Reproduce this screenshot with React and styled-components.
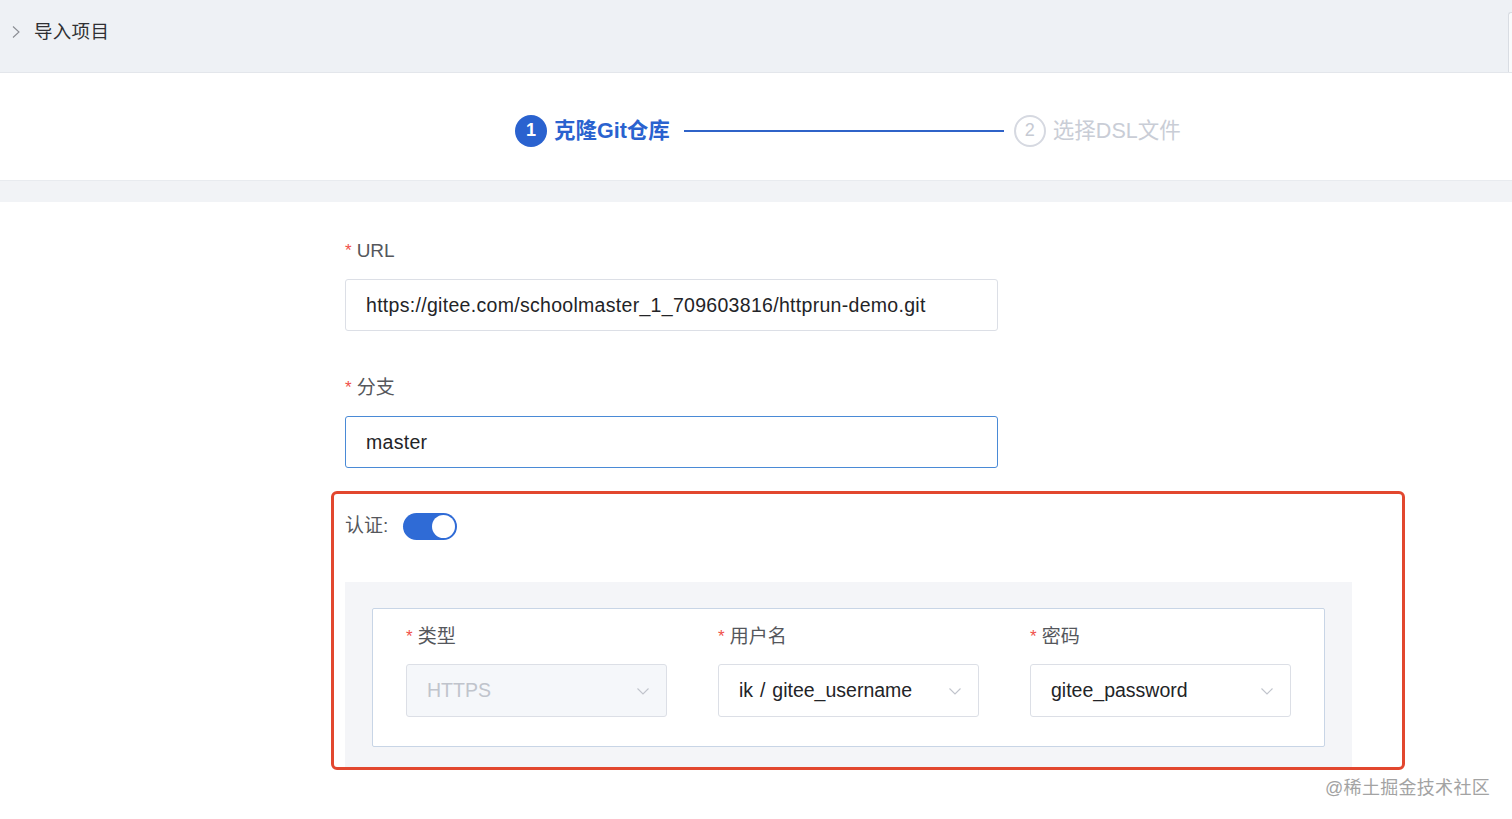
import React from "react";
import styled, { createGlobalStyle } from "styled-components";

const GlobalStyle = createGlobalStyle`
  html, body {
    margin: 0;
    padding: 0;
    background: #fff;
    font-family: "Liberation Sans", "Noto Sans CJK SC", sans-serif;
    -webkit-font-smoothing: antialiased;
  }
`;

const Page = styled.div`
  width: 1512px;
  height: 819px;
  overflow: hidden;
  position: relative;
`;

const Header = styled.header`
  height: 73px;
  box-sizing: border-box;
  background: #eef1f5;
  border-bottom: 1px solid #e3e6eb;
  display: flex;
  align-items: flex-start;
  padding: 21px 0 0 10px;
  position: relative;
`;

const Crumb = styled.div`
  display: flex;
  align-items: center;
  gap: 12px;
  height: 22px;
`;

const HeaderEdge = styled.div`
  position: absolute;
  right: 0;
  top: 12px;
  bottom: 0;
  width: 3px;
  border-left: 1px solid #d9dde3;
  border-top: 1px solid #d9dde3;
  border-top-left-radius: 3px;
  background: #fafbfc;
`;

const Title = styled.h1`
  margin: 0;
  font-size: 18.5px;
  line-height: 22px;
  font-weight: 400;
  color: #2f3033;
  letter-spacing: 0.3px;
`;

const StepsBar = styled.div`
  height: 107px;
  box-sizing: border-box;
  background: #fff;
  display: flex;
  align-items: center;
  padding: 8px 0 0 515px;
`;

const Step = styled.div`
  display: flex;
  align-items: center;
  gap: 7px;
`;

const StepIcon = styled.span`
  width: 32px;
  height: 32px;
  box-sizing: border-box;
  border-radius: 50%;
  display: flex;
  align-items: center;
  justify-content: center;
  font-size: 18px;
  font-weight: ${(p) => (p.$active ? 700 : 400)};
  background: ${(p) => (p.$active ? "#2a62cf" : "#fff")};
  color: ${(p) => (p.$active ? "#fff" : "#c6cad3")};
  border: ${(p) => (p.$active ? "none" : "2px solid #d6d9e1")};
`;

const StepText = styled.span`
  font-size: 21.5px;
  line-height: 32px;
  font-weight: ${(p) => (p.$active ? 700 : 400)};
  color: ${(p) => (p.$active ? "#2a62cf" : "#c9cdd6")};
`;

const StepLine = styled.div`
  width: 320px;
  height: 2px;
  background: #2f63c8;
  margin: 0 10px 0 14px;
`;

const Band = styled.div`
  height: 22px;
  background: #f1f3f6;
  border-top: 1px solid #e8ebef;
  box-sizing: border-box;
`;

const Form = styled.div`
  margin-left: 345px;
  padding-top: 38px;
  display: flex;
  flex-direction: column;
`;

const Field = styled.div`
  width: 653px;
  display: flex;
  flex-direction: column;
  gap: 17px;
  margin-bottom: ${(p) => p.$mb || 0}px;
`;

const Label = styled.label`
  font-size: 19px;
  line-height: 22px;
  color: #55575c;
  display: flex;
  align-items: center;
`;

const Star = styled.span`
  color: #f0504a;
  font-size: 17px;
  margin-right: 5px;
  line-height: 1;
  position: relative;
  top: -1px;
`;

const Input = styled.div`
  height: 52px;
  box-sizing: border-box;
  border: 1px solid ${(p) => (p.$focus ? "#4a8ad6" : "#dcdfe6")};
  border-radius: 3px;
  display: flex;
  align-items: center;
  padding-left: 20px;
  font-size: 19.5px;
  letter-spacing: 0.3px;
  color: #232427;
  background: #fff;
`;

const AuthSection = styled.section`
  position: relative;
  margin-top: 23px;
  padding-top: 21px;
  width: 1007px;
`;

const Highlight = styled.div`
  position: absolute;
  left: -14px;
  top: 0;
  width: 1074px;
  height: 279px;
  box-sizing: border-box;
  border: 3px solid #e2472f;
  border-radius: 6px;
  pointer-events: none;
`;

const AuthRow = styled.div`
  display: flex;
  align-items: center;
  gap: 15px;
  height: 28px;
`;

const Toggle = styled.div`
  width: 54px;
  height: 27px;
  border-radius: 14px;
  background: #2f6bd6;
  position: relative;
`;

const Knob = styled.span`
  position: absolute;
  right: 2px;
  top: 2px;
  width: 23px;
  height: 23px;
  border-radius: 50%;
  background: #fff;
`;

const Panel = styled.div`
  margin-top: 42px;
  background: #f4f5f8;
  padding: 26px 27px 21px;
`;

const InnerBox = styled.div`
  background: #fff;
  border: 1px solid #c8d5e6;
  border-radius: 2px;
  height: 139px;
  box-sizing: border-box;
  padding: 17px 0 0 33px;
  display: grid;
  grid-template-columns: 261px 261px 261px;
  column-gap: 51px;
`;

const Col = styled.div`
  display: flex;
  flex-direction: column;
  gap: 16px;
`;

const Select = styled.div`
  height: 53px;
  box-sizing: border-box;
  border: 1px solid #dcdfe6;
  border-radius: 3px;
  background: ${(p) => (p.$disabled ? "#f5f7fa" : "#fff")};
  color: ${(p) => (p.$disabled ? "#c0c4cc" : "#232427")};
  display: flex;
  align-items: center;
  justify-content: space-between;
  padding: 0 16px 0 20px;
  font-size: 19.5px;
  word-spacing: 1.5px;
`;

const Watermark = styled.div`
  position: absolute;
  right: 22px;
  top: 773px;
  font-size: 18px;
  color: #a3a3a3;
  letter-spacing: 0.3px;
`;

const Chevron = ({ dir = "down", color = "#c0c4cc", size = 14 }) =>
  dir === "down" ? (
    <svg width={size} height={size} viewBox="0 0 14 14" fill="none">
      <path d="M1.5 4.5 L7 10 L12.5 4.5" stroke={color} strokeWidth="1.1" />
    </svg>
  ) : (
    <svg width="12" height="14" viewBox="0 0 12 14" fill="none">
      <path d="M3 1.5 L9 7 L3 12.5" stroke={color} strokeWidth="1.1" />
    </svg>
  );

const Required = ({ children }) => (
  <Label>
    <Star>*</Star>
    {children}
  </Label>
);

export default function App() {
  return (
    <Page>
      <GlobalStyle />
      <Header>
        <Crumb>
          <Chevron dir="right" color="#8a8d93" />
          <Title>导入项目</Title>
        </Crumb>
        <HeaderEdge />
      </Header>

      <StepsBar>
        <Step>
          <StepIcon $active>1</StepIcon>
          <StepText $active>克隆Git仓库</StepText>
        </Step>
        <StepLine />
        <Step>
          <StepIcon>2</StepIcon>
          <StepText>选择DSL文件</StepText>
        </Step>
      </StepsBar>
      <Band />

      <Form>
        <Field $mb={46}>
          <Required>URL</Required>
          <Input>https://gitee.com/schoolmaster_1_709603816/httprun-demo.git</Input>
        </Field>
        <Field>
          <Required>分支</Required>
          <Input $focus>master</Input>
        </Field>

        <AuthSection>
          <Highlight />
          <AuthRow>
            <Label>认证:</Label>
            <Toggle>
              <Knob />
            </Toggle>
          </AuthRow>
          <Panel>
            <InnerBox>
              <Col>
                <Required>类型</Required>
                <Select $disabled>
                  HTTPS
                  <Chevron />
                </Select>
              </Col>
              <Col>
                <Required>用户名</Required>
                <Select>
                  ik / gitee_username
                  <Chevron />
                </Select>
              </Col>
              <Col>
                <Required>密码</Required>
                <Select>
                  gitee_password
                  <Chevron />
                </Select>
              </Col>
            </InnerBox>
          </Panel>
        </AuthSection>
      </Form>

      <Watermark>@稀土掘金技术社区</Watermark>
    </Page>
  );
}
